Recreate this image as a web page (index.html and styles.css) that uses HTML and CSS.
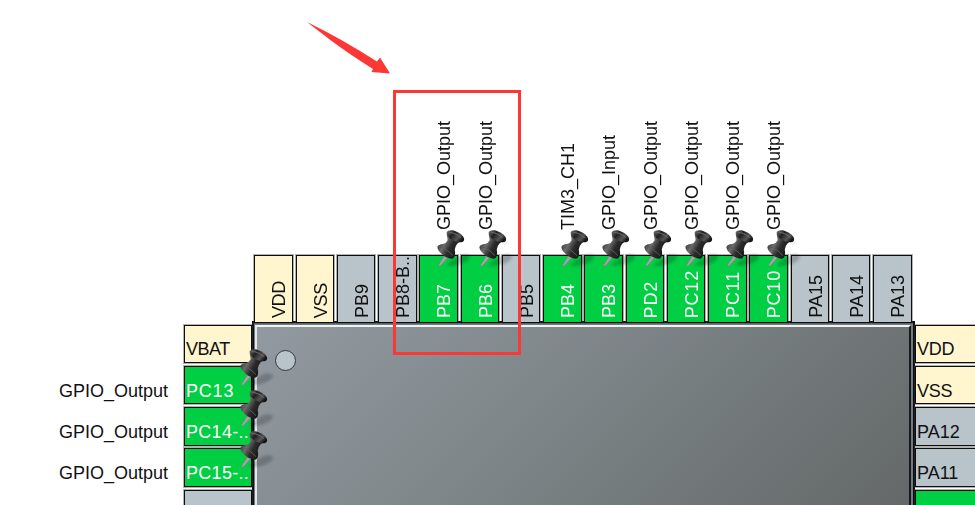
FILE: index.html
```html
<!DOCTYPE html>
<html lang="en">
<head>
<meta charset="utf-8">
<title>Pinout view</title>
<link rel="stylesheet" href="styles.css">
</head>
<body>
<svg class="defs" width="0" height="0" aria-hidden="true">
  <defs>
    <linearGradient id="body" x1="0" y1="0.2" x2="1" y2="0.75">
      <stop offset="0" stop-color="#1c1c1c"/><stop offset="0.32" stop-color="#6c6c6c"/>
      <stop offset="0.55" stop-color="#2c2c2c"/><stop offset="1" stop-color="#0c0c0c"/>
    </linearGradient>
    <linearGradient id="head" x1="0" y1="0" x2="1" y2="0.6">
      <stop offset="0" stop-color="#777"/><stop offset="0.4" stop-color="#202020"/>
      <stop offset="0.75" stop-color="#555"/><stop offset="1" stop-color="#151515"/>
    </linearGradient>
    <filter id="soft" x="-50%" y="-50%" width="200%" height="200%"><feGaussianBlur stdDeviation="5"/></filter>
    <filter id="edge"><feGaussianBlur stdDeviation="1.2"/></filter>
    <symbol id="tack" viewBox="0 0 120 126">
      <path d="M36 110 Q58 88 80 80 Q100 76 106 86 Q100 100 78 108 Q62 114 36 114Z" fill="#000" opacity="0.2" filter="url(#soft)"/>
      <g filter="url(#edge)">
        <path d="M28 84 L10 112 L15 115 L38 89Z" fill="#a4a4a4" stroke="#808080" stroke-width="2"/>
        <path d="M7 57 Q10 49 24 48 Q34 46 38 37 L35 17 L80 38 L68 46 Q57 58 60 70 Q62 88 52 92 Q36 91 23 80 Q8 69 7 57Z" fill="url(#body)"/>
        <path d="M12 56 Q30 58 54 83" fill="none" stroke="#5c5c5c" stroke-width="3"/>
        <path d="M35 12 Q39 5 54 7 Q74 13 85 26 Q91 38 82 42 Q68 45 51 36 Q34 26 35 12Z" fill="url(#head)"/>
        <path d="M43 14 Q57 12 77 29" fill="none" stroke="#707070" stroke-width="3"/>
      </g>
    </symbol>
  </defs>
</svg>
<main class="board">
  <section class="top">
    <div class="slot"><div class="pin power"><span class="tight">VDD</span></div></div>
    <div class="slot"><div class="pin power"><span class="tight">VSS</span></div></div>
    <div class="slot"><div class="pin"><span>PB9</span></div></div>
    <div class="slot"><div class="pin"><span>PB8-B..</span></div></div>
    <div class="slot"><span class="net">GPIO_Output</span><div class="pin used"><span>PB7</span></div><svg class="tack"><use href="#tack"/></svg></div>
    <div class="slot"><span class="net">GPIO_Output</span><div class="pin used"><span>PB6</span></div><svg class="tack"><use href="#tack"/></svg></div>
    <div class="slot"><div class="pin"><span>PB5</span></div></div>
    <div class="slot"><span class="net">TIM3_CH1</span><div class="pin used"><span>PB4</span></div><svg class="tack"><use href="#tack"/></svg></div>
    <div class="slot"><span class="net">GPIO_Input</span><div class="pin used"><span>PB3</span></div><svg class="tack"><use href="#tack"/></svg></div>
    <div class="slot"><span class="net">GPIO_Output</span><div class="pin used"><span class="wide">PD2</span></div><svg class="tack"><use href="#tack"/></svg></div>
    <div class="slot"><span class="net">GPIO_Output</span><div class="pin used"><span class="wide">PC12</span></div><svg class="tack"><use href="#tack"/></svg></div>
    <div class="slot"><span class="net">GPIO_Output</span><div class="pin used"><span class="wide">PC11</span></div><svg class="tack"><use href="#tack"/></svg></div>
    <div class="slot"><span class="net">GPIO_Output</span><div class="pin used"><span class="wide">PC10</span></div><svg class="tack"><use href="#tack"/></svg></div>
    <div class="slot"><div class="pin"><span>PA15</span></div></div>
    <div class="slot"><div class="pin"><span>PA14</span></div></div>
    <div class="slot"><div class="pin"><span>PA13</span></div></div>
  </section>
  <section class="side left">
    <div class="slot"><div class="pin power first"><span class="tighter">VBAT</span></div></div>
    <div class="slot"><span class="net">GPIO_Output</span><div class="pin used"><span class="wide">PC13</span></div><svg class="tack"><use href="#tack"/></svg></div>
    <div class="slot"><span class="net">GPIO_Output</span><div class="pin used"><span class="long">PC14-..</span></div><svg class="tack"><use href="#tack"/></svg></div>
    <div class="slot"><span class="net">GPIO_Output</span><div class="pin used"><span class="long">PC15-..</span></div><svg class="tack"><use href="#tack"/></svg></div>
    <div class="slot"><div class="pin"></div></div>
  </section>
  <section class="chip"><div class="die"><div class="dot"></div></div></section>
  <section class="side right">
    <div class="slot"><div class="pin power first"><span class="tight">VDD</span></div></div>
    <div class="slot"><div class="pin power"><span class="tight">VSS</span></div></div>
    <div class="slot"><div class="pin"><span>PA12</span></div></div>
    <div class="slot"><div class="pin"><span>PA11</span></div></div>
    <div class="slot"><div class="pin used"></div></div>
  </section>
  <div class="highlight"></div>
  <svg class="arrow" viewBox="0 0 84 54"><path d="M0 0 Q34 16.500 70 39.500 L73 35.500 L83 51.500 L64.500 50 L66 47 Q42 32 22 17 Z" fill="#fc3836"/></svg>
</main>
</body>
</html>
```
FILE: styles.css
```css
* { box-sizing: border-box; }
body {
  margin: 0;
  background: #fff;
  color: #111;
  font: 18px/20px "Liberation Sans", Arial, sans-serif;
}
.defs { position: absolute; }
.board {
  position: relative;
  width: 975px;
  height: 505px;
  overflow: hidden;
  display: grid;
  grid-template-columns: 252px 663px 60px;
  grid-template-rows: 322px 183px;
}
.slot { position: relative; display: flex; }
.pin {
  flex: none;
  border: 1px solid #0c0e0e;
  box-shadow: 0 0 0 1px rgba(60, 66, 66, 0.4);
  background: #b8c3ca;
  white-space: nowrap;
}
.power { background: #fff5cf; }
.used { background: #00ce43; color: #fff; }
.wide { letter-spacing: 0.8px; }
.long { letter-spacing: 0.3px; }
.tight { letter-spacing: -0.3px; }
.tighter { letter-spacing: -0.5px; }
.tack { position: absolute; width: 40px; height: 42px; z-index: 2; }

.top {
  grid-area: 1 / 2;
  display: grid;
  grid-template-columns: repeat(16, 41.25px);
  padding-left: 2.4px;
}
.top .slot { flex-direction: column; justify-content: flex-end; }
.top .pin {
  width: 38.5px;
  height: 68px;
  margin-bottom: -1px;
  display: flex;
  align-items: flex-end;
  padding: 0 0 4px 14px;
}
.top span { writing-mode: vertical-rl; transform: rotate(180deg); width: 20px; }
.top .net { margin: 0 0 25px 15px; }
.top .tack { left: 16px; top: 228px; }

.side { grid-row: 2; padding-top: 2.5px; }
.side .slot { height: 41.25px; justify-content: flex-end; }
.side .pin { width: 68px; height: 38.5px; padding: 14px 0 0 1px; }
.side .first { padding-top: 13px; }
.side .net { padding: 15px 16px 0 0; }
.side .tack { left: 238px; top: -19px; }
.left { grid-column: 1; position: relative; z-index: 1; }
.right { grid-column: 3; }
.right .pin { width: 62px; }
.right .slot { justify-content: flex-start; }

.chip {
  grid-area: 2 / 2;
  height: 660px;
  margin-top: -1px;
  border: 2px solid #0c0e0f;
  background: #727b82;
  padding: 2px 2px 3px 1px;
}
.die {
  display: flex;
  height: 650px;
  border-top: 2px solid #f2f3f3;
  border-left: 2px solid #e4e6e7;
  border-right: 2px solid #15181a;
  background: linear-gradient(135deg, #929aa1 0%, #7c8487 30%, #646868 64%, #484b4b 100%);
}
.dot {
  width: 21px;
  height: 21px;
  margin: 23px 0 0 18px;
  border: 1.5px solid #33393c;
  border-radius: 50%;
  background: #b8c3ca;
}
.highlight {
  position: absolute;
  left: 393px;
  top: 90px;
  width: 128px;
  height: 265px;
  border: 3px solid #fc3836;
  z-index: 3;
}
.arrow { position: absolute; left: 307px; top: 22px; width: 84px; height: 54px; }
```
